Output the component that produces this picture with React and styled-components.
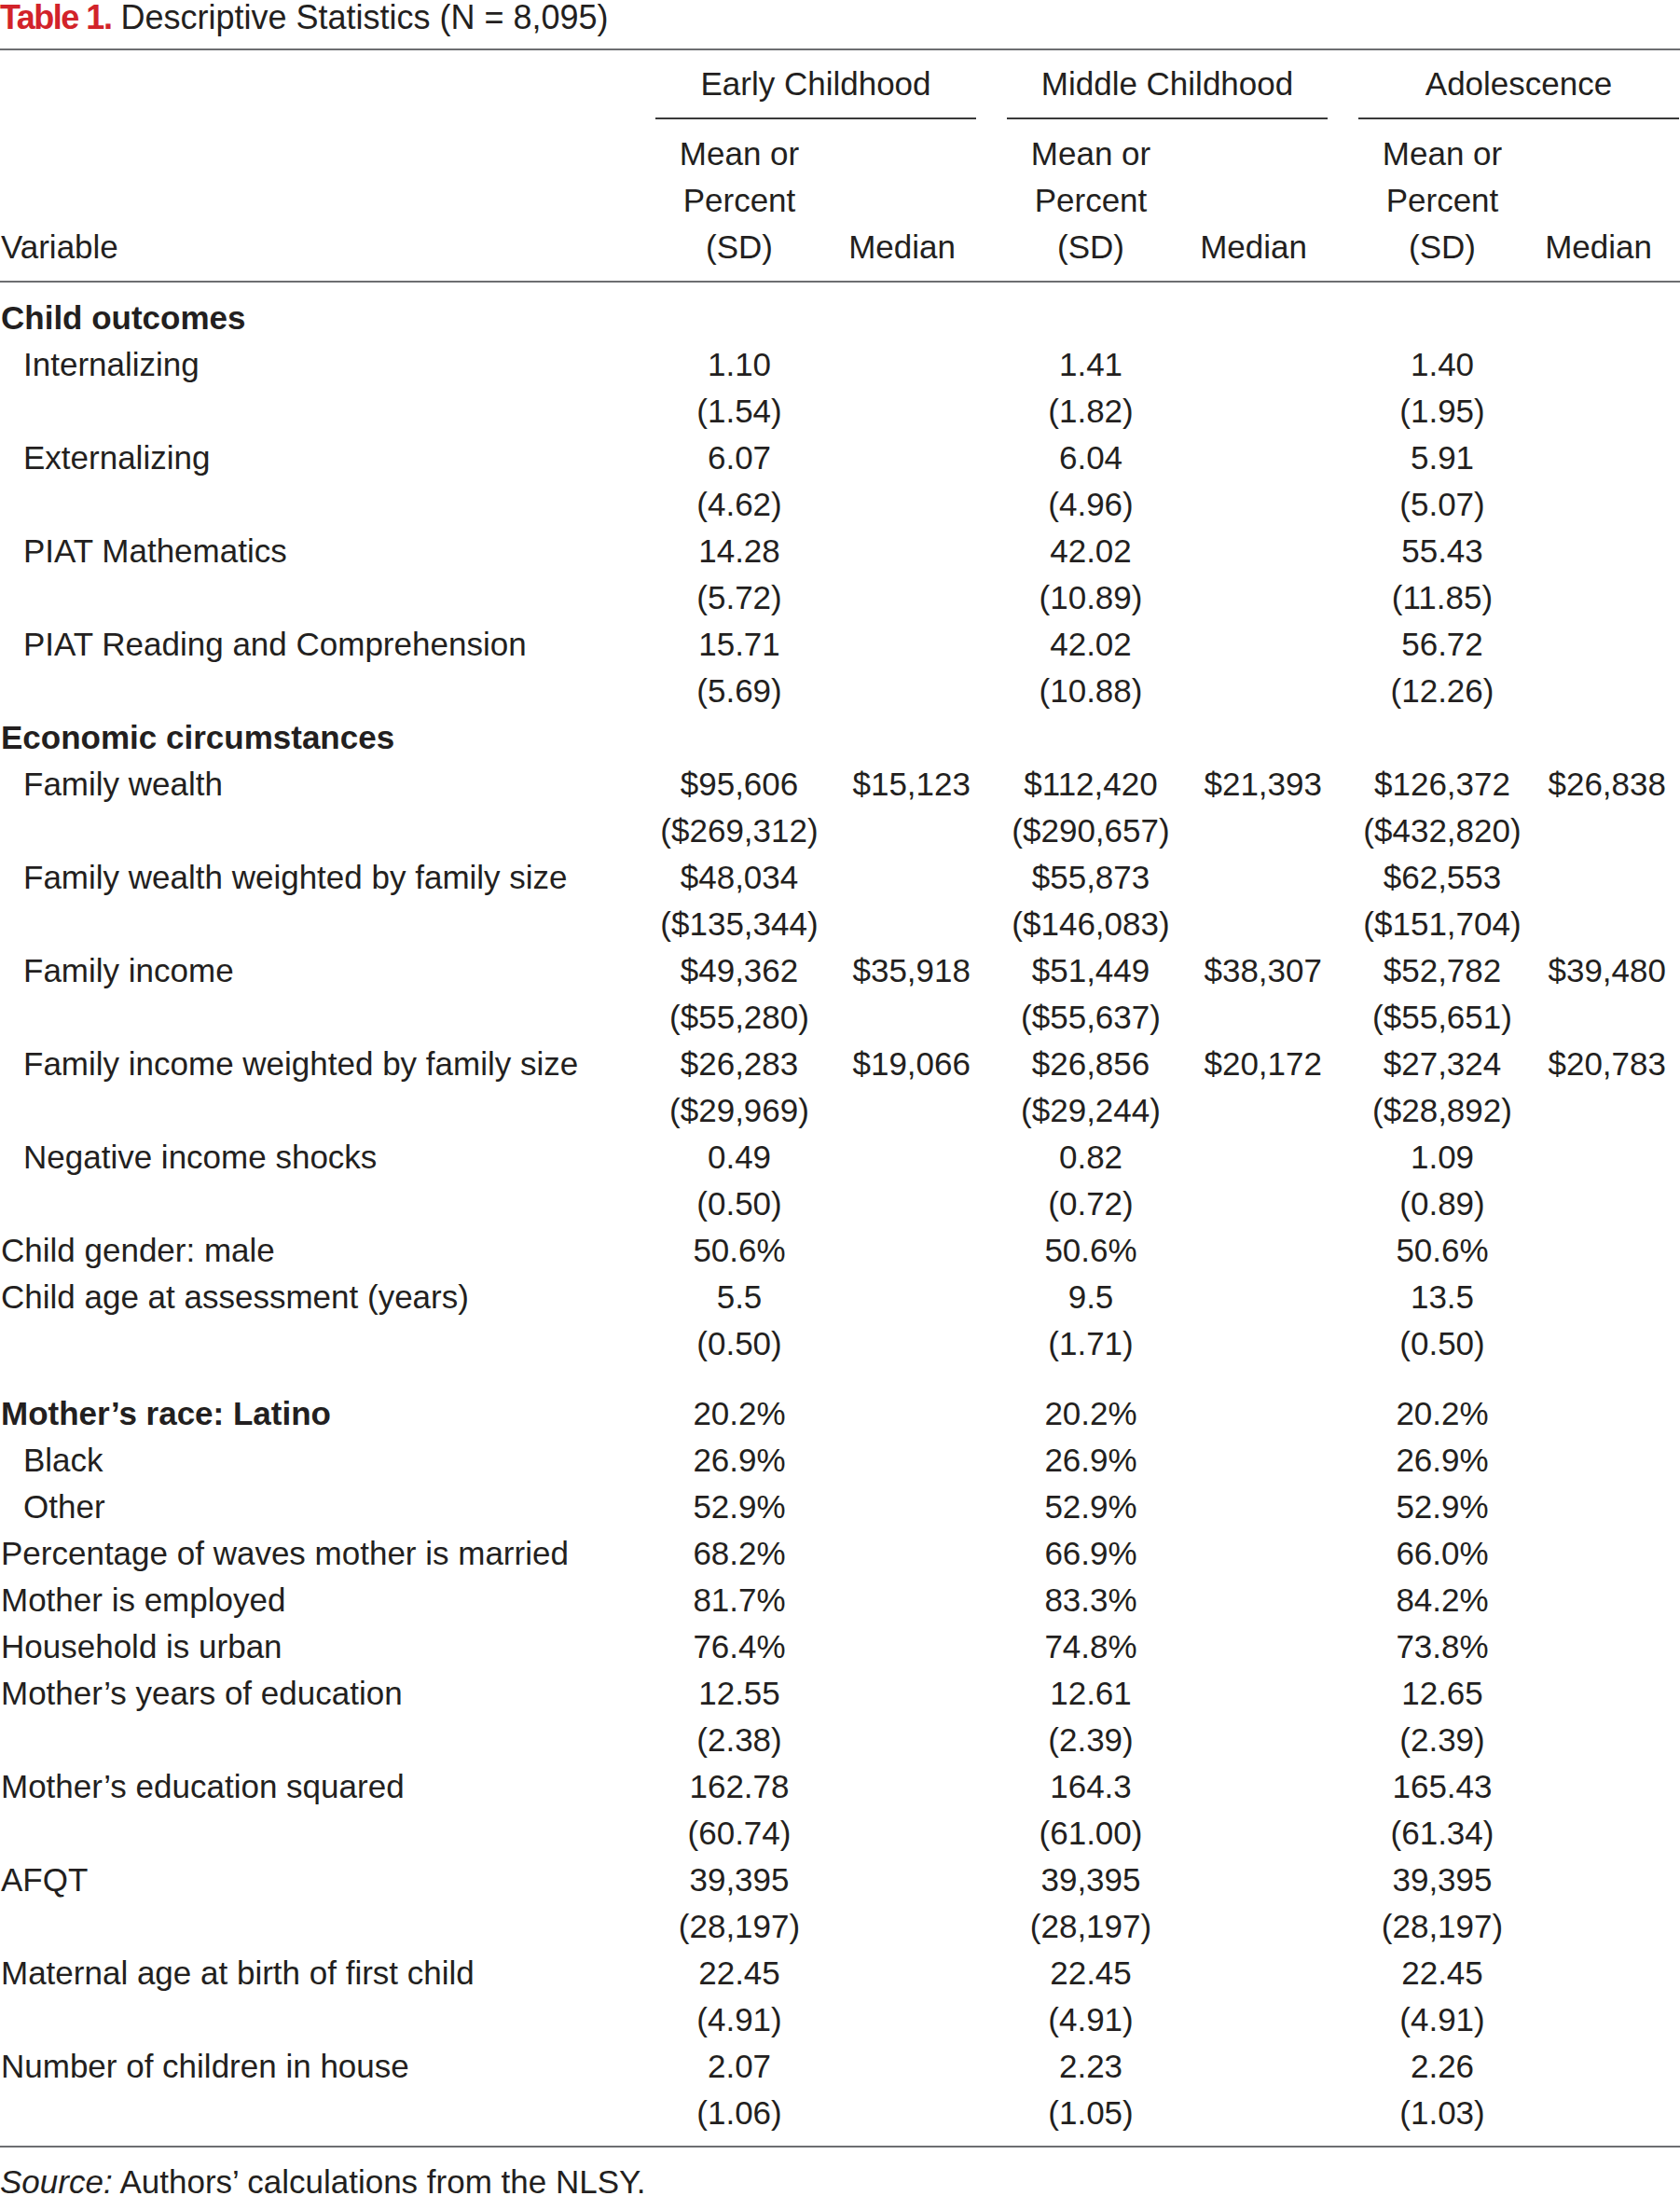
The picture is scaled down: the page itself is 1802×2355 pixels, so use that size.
import styled, { createGlobalStyle } from "styled-components";

const GlobalStyle = createGlobalStyle`
    body {
        margin: 0;
        background: #ffffff;
    }
`;

const m = (a, b, c) => [a, "", b, "", c, ""];

const rows = [
    { label: "Child outcomes", head: true },
    { label: "Internalizing", indent: true, v: m("1.10", "1.41", "1.40") },
    { v: m("(1.54)", "(1.82)", "(1.95)") },
    { label: "Externalizing", indent: true, v: m("6.07", "6.04", "5.91") },
    { v: m("(4.62)", "(4.96)", "(5.07)") },
    { label: "PIAT Mathematics", indent: true, v: m("14.28", "42.02", "55.43") },
    { v: m("(5.72)", "(10.89)", "(11.85)") },
    { label: "PIAT Reading and Comprehension", indent: true, v: m("15.71", "42.02", "56.72") },
    { v: m("(5.69)", "(10.88)", "(12.26)") },
    { label: "Economic circumstances", head: true },
    { label: "Family wealth", indent: true, v: ["$95,606", "$15,123", "$112,420", "$21,393", "$126,372", "$26,838"] },
    { v: m("($269,312)", "($290,657)", "($432,820)") },
    { label: "Family wealth weighted by family size", indent: true, v: m("$48,034", "$55,873", "$62,553") },
    { v: m("($135,344)", "($146,083)", "($151,704)") },
    { label: "Family income", indent: true, v: ["$49,362", "$35,918", "$51,449", "$38,307", "$52,782", "$39,480"] },
    { v: m("($55,280)", "($55,637)", "($55,651)") },
    { label: "Family income weighted by family size", indent: true, v: ["$26,283", "$19,066", "$26,856", "$20,172", "$27,324", "$20,783"] },
    { v: m("($29,969)", "($29,244)", "($28,892)") },
    { label: "Negative income shocks", indent: true, v: m("0.49", "0.82", "1.09") },
    { v: m("(0.50)", "(0.72)", "(0.89)") },
    { label: "Child gender: male", v: m("50.6%", "50.6%", "50.6%") },
    { label: "Child age at assessment (years)", v: m("5.5", "9.5", "13.5") },
    { v: m("(0.50)", "(1.71)", "(0.50)") },
    { spacer: true },
    { label: "Mother\u2019s race: Latino", head: true, v: m("20.2%", "20.2%", "20.2%") },
    { label: "Black", indent: true, v: m("26.9%", "26.9%", "26.9%") },
    { label: "Other", indent: true, v: m("52.9%", "52.9%", "52.9%") },
    { label: "Percentage of waves mother is married", v: m("68.2%", "66.9%", "66.0%") },
    { label: "Mother is employed", v: m("81.7%", "83.3%", "84.2%") },
    { label: "Household is urban", v: m("76.4%", "74.8%", "73.8%") },
    { label: "Mother\u2019s years of education", v: m("12.55", "12.61", "12.65") },
    { v: m("(2.38)", "(2.39)", "(2.39)") },
    { label: "Mother\u2019s education squared", v: m("162.78", "164.3", "165.43") },
    { v: m("(60.74)", "(61.00)", "(61.34)") },
    { label: "AFQT", v: m("39,395", "39,395", "39,395") },
    { v: m("(28,197)", "(28,197)", "(28,197)") },
    { label: "Maternal age at birth of first child", v: m("22.45", "22.45", "22.45") },
    { v: m("(4.91)", "(4.91)", "(4.91)") },
    { label: "Number of children in house", v: m("2.07", "2.23", "2.26") },
    { v: m("(1.06)", "(1.05)", "(1.03)") },
];

const groups = ["Early Childhood", "Middle Childhood", "Adolescence"];

function App() {
    return (
        <Page>
            <GlobalStyle />
            <Caption>
                <TableNo>Table 1.</TableNo> Descriptive Statistics (N = 8,095)
            </Caption>
            <Table>
                <HeadTop>
                    <span />
                    {groups.map((g) => (
                        <GroupTitle key={g}>{g}</GroupTitle>
                    ))}
                </HeadTop>
                <SubHead>
                    <HeadLabel>Variable</HeadLabel>
                    {groups.map((g, i) => (
                        <Group key={g}>
                            <HeadMean>
                                <span>Mean or</span>
                                <span>Percent</span>
                                <span>(SD)</span>
                            </HeadMean>
                            <HeadMedian $pad={i === 2 ? 29 : 22}>Median</HeadMedian>
                        </Group>
                    ))}
                </SubHead>
                <Body>
                    {rows.map((r, ndx) =>
                        r.spacer ? (
                            <Spacer key={ndx} />
                        ) : (
                            <Row key={ndx}>
                                <Label $indent={r.indent} $bold={r.head}>{r.label}</Label>
                                {[0, 1, 2].map((g) => (
                                    <Group key={g}>
                                        <Mean>{r.v ? r.v[g * 2] : ""}</Mean>
                                        <Median $pad={g === 2 ? 14 : 6}>{r.v ? r.v[g * 2 + 1] : ""}</Median>
                                    </Group>
                                ))}
                            </Row>
                        )
                    )}
                </Body>
            </Table>
            <Source>
                <em>Source:</em> Authors’ calculations from the NLSY.
            </Source>
        </Page>
    );
}

const Page = styled.div`
    width: 1802px;
    font-family: "Liberation Sans", Arial, sans-serif;
    font-size: 35px;
    color: #231f20;
`;
const Caption = styled.div`
    height: 38px;
    line-height: 38px;
    margin-bottom: 14px;
    font-size: 36px;
    white-space: nowrap;
`;
const TableNo = styled.span`
    font-weight: 700;
    color: #d2232a;
    letter-spacing: -1.5px;
`;
const Table = styled.div`
    border-top: 2px solid #6d6e71;
    border-bottom: 2px solid #6d6e71;
`;
const HeadTop = styled.div`
    display: grid;
    grid-template-columns: 670px repeat(3, 344px);
    column-gap: 33px;
    padding-top: 11px;
`;
const GroupTitle = styled.div`
    line-height: 50px;
    padding-bottom: 11px;
    text-align: center;
    border-bottom: 2px solid #3a3a3a;
`;
const SubHead = styled.div`
    display: grid;
    grid-template-columns: 670px repeat(3, 344px);
    column-gap: 33px;
    padding: 12px 0 11px;
    border-bottom: 2px solid #6d6e71;
    line-height: 50px;
`;
const HeadLabel = styled.div`
    align-self: end;
    padding-left: 1px;
`;
const Group = styled.div`
    display: grid;
    grid-template-columns: 180px 1fr;
`;
const HeadMean = styled.div`
    display: flex;
    flex-direction: column;
    align-items: center;
`;
const HeadMedian = styled.div`
    align-self: end;
    text-align: right;
    padding-right: ${(p) => p.$pad}px;
`;
const Body = styled.div`
    padding: 13px 0 10px;
`;
const Row = styled.div`
    display: grid;
    grid-template-columns: 670px repeat(3, 344px);
    column-gap: 33px;
    height: 50px;
    line-height: 50px;
    white-space: nowrap;
`;
const Spacer = styled.div`
    height: 25px;
`;
const Label = styled.div`
    padding-left: ${(p) => (p.$indent ? 25 : 1)}px;
    font-weight: ${(p) => (p.$bold ? 700 : 400)};
`;
const Mean = styled.div`
    text-align: center;
`;
const Median = styled.div`
    text-align: right;
    padding-right: ${(p) => p.$pad}px;
`;
const Source = styled.div`
    padding-top: 12px;
    line-height: 50px;
    white-space: nowrap;
`;

export default App;
